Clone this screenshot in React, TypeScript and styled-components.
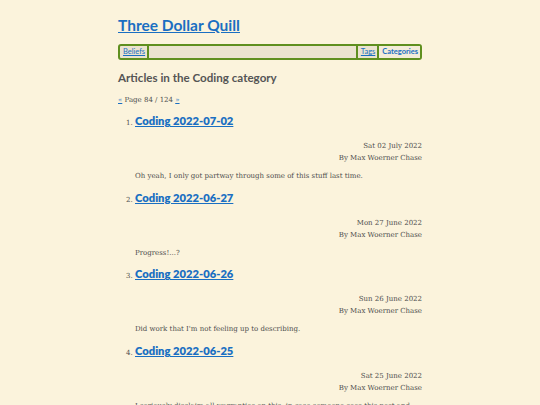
import React from "react";
import styled, { createGlobalStyle } from "styled-components";

const GlobalStyle = createGlobalStyle`
  html, body {
    margin: 0;
    padding: 0;
    background: #fbf3dc;
  }
  body {
    font-family: "DejaVu Serif", "Liberation Serif", serif;
    color: #4d4d4d;
  }
`;

const Page = styled.div`
  width: 304px;
  margin: 0 auto;
  padding-top: 14px;
`;

const SiteTitle = styled.h1`
  margin: 0;
  font-family: Lato, "Open Sans", sans-serif;
  font-size: 15.5px;
  font-weight: 700;
  line-height: 22px;
  & a {
    color: #1a6fc2;
  }
`;

const NavBar = styled.nav`
  margin-top: 8px;
  display: flex;
  align-items: stretch;
  height: 12px;
  border: 2px solid #5f8f1f;
  border-radius: 3px;
  background: #ebe3cf;
  font-family: Lato, "Open Sans", sans-serif;
  font-size: 7.5px;
  line-height: 12px;
`;

const NavItem = styled.a<{ $current?: boolean }>`
  padding: 0 2px 0 3px;
  color: #1a6fc2;
  font-weight: ${({ $current }) => ($current ? 700 : 400)};
  text-decoration: ${({ $current }) => ($current ? "none" : "underline")};
  background: ${({ $current }) => ($current ? "#f3ecd9" : "transparent")};
`;

const Bar = styled.span`
  width: 2px;
  background: #5f8f1f;
`;

const Spacer = styled.span`
  flex: 1;
`;

const Heading = styled.h2`
  margin: 10px 0 0;
  font-family: Lato, "Open Sans", sans-serif;
  font-size: 11.6px;
  font-weight: 700;
  line-height: 16px;
  color: #555;
`;

const Pager = styled.p`
  margin: 9px 0 0;
  font-size: 7px;
  line-height: 10px;
  & a {
    color: #1a6fc2;
  }
`;

const List = styled.ol`
  margin: 8px 0 0;
  padding-left: 17px;
`;

const Item = styled.li`
  font-size: 7px;
  height: 76.7px;
  &::marker {
    font-size: 7px;
  }
`;

const ItemTitle = styled.h3`
  margin: 0;
  font-family: Lato, "Open Sans", sans-serif;
  font-size: 11.2px;
  font-weight: 800;
  line-height: 16px;
  & a {
    color: #1a6fc2;
  }
`;

const Meta = styled.div`
  margin-top: 11px;
  text-align: right;
  font-size: 7px;
  line-height: 12px;
`;

const Summary = styled.p`
  margin: 7px 0 0;
  font-size: 7px;
  line-height: 10px;
`;

const posts = [
  { title: "Coding 2022-07-02", date: "Sat 02 July 2022", summary: "Oh yeah, I only got partway through some of this stuff last time." },
  { title: "Coding 2022-06-27", date: "Mon 27 June 2022", summary: "Progress!...?" },
  { title: "Coding 2022-06-26", date: "Sun 26 June 2022", summary: "Did work that I'm not feeling up to describing." },
  { title: "Coding 2022-06-25", date: "Sat 25 June 2022", summary: "I seriously disclaim all warranties on this, in case someone sees this post and" },
];

export default function App() {
  return (
    <>
      <GlobalStyle />
      <Page>
        <SiteTitle>
          <a href="#">Three Dollar Quill</a>
        </SiteTitle>
        <NavBar>
          <NavItem href="#">Beliefs</NavItem>
          <Bar />
          <Spacer />
          <Bar />
          <NavItem href="#">Tags</NavItem>
          <Bar />
          <NavItem href="#" $current>Categories</NavItem>
        </NavBar>
        <Heading>Articles in the Coding category</Heading>
        <Pager>
          <a href="#">«</a> Page 84 / 124 <a href="#">»</a>
        </Pager>
        <List>
          {posts.map((p) => (
            <Item key={p.title}>
              <ItemTitle>
                <a href="#">{p.title}</a>
              </ItemTitle>
              <Meta>
                {p.date}
                <br />
                By Max Woerner Chase
              </Meta>
              <Summary>{p.summary}</Summary>
            </Item>
          ))}
        </List>
      </Page>
    </>
  );
}
